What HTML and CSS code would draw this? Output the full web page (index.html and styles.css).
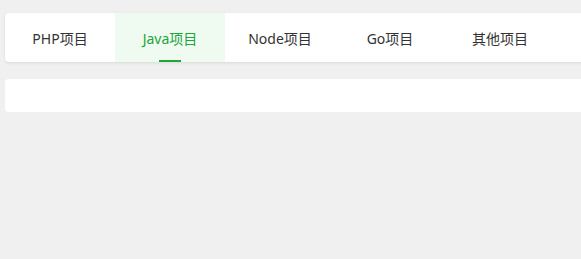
FILE: index.html
```html
<!DOCTYPE html>
<html lang="zh-CN">
<head>
<meta charset="utf-8">
<title>项目</title>
<link rel="stylesheet" href="styles.css">
</head>
<body>
<div class="page">
  <div class="tabs-card">
    <div class="tab">PHP项目</div>
    <div class="tab active">Java项目</div>
    <div class="tab">Node项目</div>
    <div class="tab">Go项目</div>
    <div class="tab">其他项目</div>
  </div>
  <div class="content-card"></div>
</div>
</body>
</html>
```
FILE: styles.css
```css
html, body {
  margin: 0;
  padding: 0;
  background: #f0f0f0;
  overflow: hidden;
}
body {
  font-family: "Noto Sans", "Noto Sans CJK SC", sans-serif;
  font-size: 14px;
  color: #333;
}
.page {
  padding: 13px 0 0 5px;
  width: 600px;
  display: flex;
  flex-direction: column;
  gap: 17px;
}
.tabs-card {
  display: flex;
  height: 49px;
  background: #fff;
  border-radius: 4px;
  box-shadow: 0 1px 3px rgba(0, 0, 0, 0.1);
  overflow: hidden;
}
.tab {
  width: 110px;
  display: flex;
  align-items: center;
  justify-content: center;
  position: relative;
}
.tab.active {
  background: #effaf1;
  color: #20a53a;
}
.tab.active::after {
  content: "";
  position: absolute;
  left: 44px;
  bottom: 0;
  width: 22px;
  height: 2px;
  background: #20a53a;
}
.content-card {
  height: 33px;
  background: #fff;
  border-radius: 4px;
}
```
